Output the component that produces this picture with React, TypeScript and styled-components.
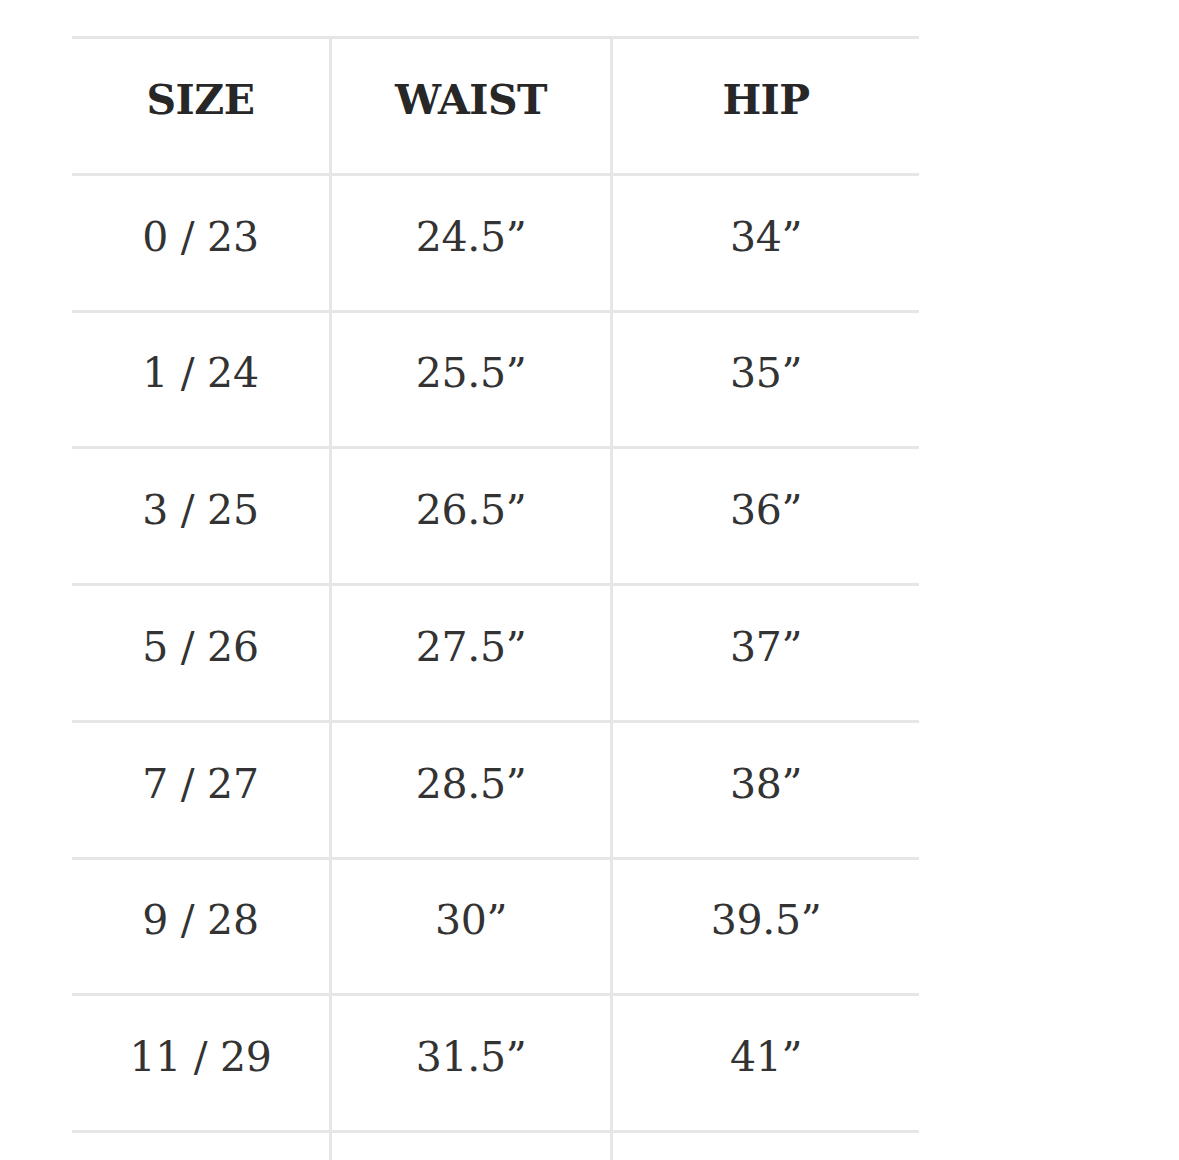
import React from 'react';
import styled, { createGlobalStyle } from 'styled-components';

const GlobalStyle = createGlobalStyle`
  html, body {
    margin: 0;
    padding: 0;
    background: #ffffff;
  }
  * {
    box-sizing: border-box;
  }
`;

const Page = styled.div`
  height: 1160px;
  overflow: hidden;
  padding: 36px 0 0 72px;
  background: #ffffff;
  font-family: 'DejaVu Serif', 'Liberation Serif', serif;
`;

const Table = styled.div`
  display: grid;
  grid-template-columns: 257px 281px 309px;
  width: 847px;
`;

const Cell = styled.div<{ $first?: boolean; $head?: boolean }>`
  height: 136.75px;
  border-top: 3px solid #e6e6e6;
  border-left: ${(p) => (p.$first ? 'none' : '3px solid #e6e6e6')};
  display: flex;
  align-items: center;
  justify-content: center;
  padding-bottom: 12px;
  font-size: 41px;
  font-weight: ${(p) => (p.$head ? 700 : 400)};
  color: ${(p) => (p.$head ? '#272727' : '#333333')};
  letter-spacing: ${(p) => (p.$head ? '-0.5px' : '-0.3px')};
  white-space: nowrap;
`;

const headers = ['SIZE', 'WAIST', 'HIP'];

const rows: string[][] = [
  ['0 / 23', '24.5\u201D', '34\u201D'],
  ['1 / 24', '25.5\u201D', '35\u201D'],
  ['3 / 25', '26.5\u201D', '36\u201D'],
  ['5 / 26', '27.5\u201D', '37\u201D'],
  ['7 / 27', '28.5\u201D', '38\u201D'],
  ['9 / 28', '30\u201D', '39.5\u201D'],
  ['11 / 29', '31.5\u201D', '41\u201D'],
  // next row starts at the bottom edge of the view; its text is below the fold
  ['', '', ''],
];

const App: React.FC = () => {
  return (
    <Page>
      <GlobalStyle />
      <Table>
        {headers.map((h, i) => (
          <Cell key={h} $head $first={i === 0}>
            {h}
          </Cell>
        ))}
        {rows.map((row, r) =>
          row.map((val, c) => (
            <Cell key={`${r}-${c}`} $first={c === 0}>
              {val}
            </Cell>
          ))
        )}
      </Table>
    </Page>
  );
};

export default App;
